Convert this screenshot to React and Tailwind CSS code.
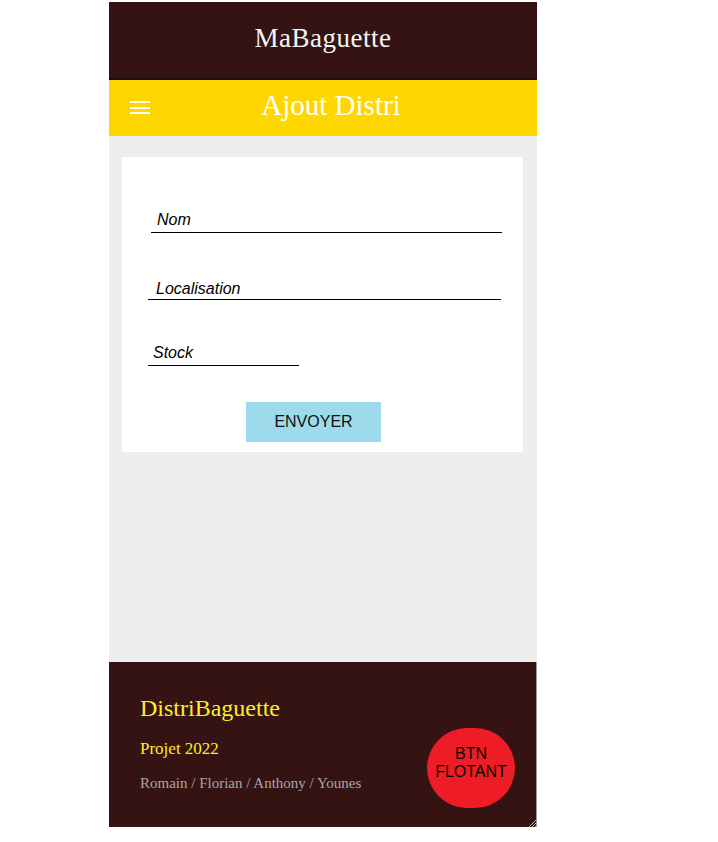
export default function App() {
  return (
    <div className="w-[718px] h-[842px] bg-white">
      <div className="ml-[109px] pt-[2px] w-[428px] flex flex-col">
        {/* Top bar */}
        <header className="h-[76px] bg-[#351313] flex items-center justify-center">
          <h1 className="text-[27px] text-[#f4f4f4] font-['Liberation_Serif',serif] tracking-[0.5px] mt-[-3px]">
            MaBaguette
          </h1>
        </header>
        <div className="h-[2px] bg-[#1d0c06]" />

        {/* Page title */}
        <div className="h-[56px] bg-[#ffd700] flex items-center relative">
          <button className="absolute left-[21px] top-[21px] w-[20px] flex flex-col gap-[3.5px]">
            <span className="block h-[2px] bg-white" />
            <span className="block h-[2px] bg-white" />
            <span className="block h-[2px] bg-white" />
          </button>
          <h2 className="w-full text-center pl-[16px] text-[29px] text-white font-['Liberation_Serif',serif] mt-[-5px]">
            Ajout Distri
          </h2>
        </div>

        {/* Content */}
        <main className="h-[526px] bg-[#eeeeee] pt-[21px] px-[13px]">
          <form className="bg-white w-[401px] pt-[54px] pb-[10px] flex flex-col font-['Liberation_Sans',Arial,sans-serif]">
            <input
              placeholder="Nom"
              className="ml-[29px] w-[351px] h-[22px] border-b border-black px-[6px] pb-[4px] text-[16px] italic placeholder:text-black outline-none"
            />
            <input
              placeholder="Localisation"
              className="ml-[26px] mt-[45px] w-[353px] h-[22px] border-b border-black px-[8px] text-[16px] italic placeholder:text-black outline-none"
            />
            <input
              placeholder="Stock"
              className="ml-[26px] mt-[44px] w-[151px] h-[22px] border-b border-black px-[5px] pb-[4px] text-[16px] italic placeholder:text-black outline-none"
            />
            <button
              type="button"
              className="mt-[36px] ml-[124px] w-[135px] h-[40px] bg-[#9ddaeb] text-[16px] text-[#111]"
            >
              ENVOYER
            </button>
          </form>
        </main>

        {/* Footer */}
        <footer className="relative w-[428px] h-[165px] bg-[#351313] border-r border-[#9a9a9a] pl-[31px] pt-[32px] font-['Liberation_Serif',serif]">
          <p className="text-[24px] text-[#ffee22] leading-[28px]">DistriBaguette</p>
          <p className="mt-[17px] text-[17px] text-[#ffee22] leading-[20px]">Projet 2022</p>
          <p className="mt-[14px] text-[15px] text-[#a7a7a7] leading-[20px]">
            Romain / Florian / Anthony / Younes
          </p>
          <button className="absolute left-[318px] top-[66px] w-[88px] h-[80px] rounded-full bg-[#ee1c25] text-black text-[16px] leading-[18px] font-['Liberation_Sans',Arial,sans-serif] flex flex-col items-center justify-center pb-[10px]">
            <span>BTN</span>
            <span>FLOTANT</span>
          </button>
          <svg className="absolute right-[0px] bottom-[0px]" width="8" height="8" viewBox="0 0 8 8">
            <path d="M8 1 L1 8 M8 4 L4 8 M8 7 L7 8" stroke="#bcbcbc" strokeWidth="1" />
          </svg>
        </footer>
      </div>
    </div>
  );
}
